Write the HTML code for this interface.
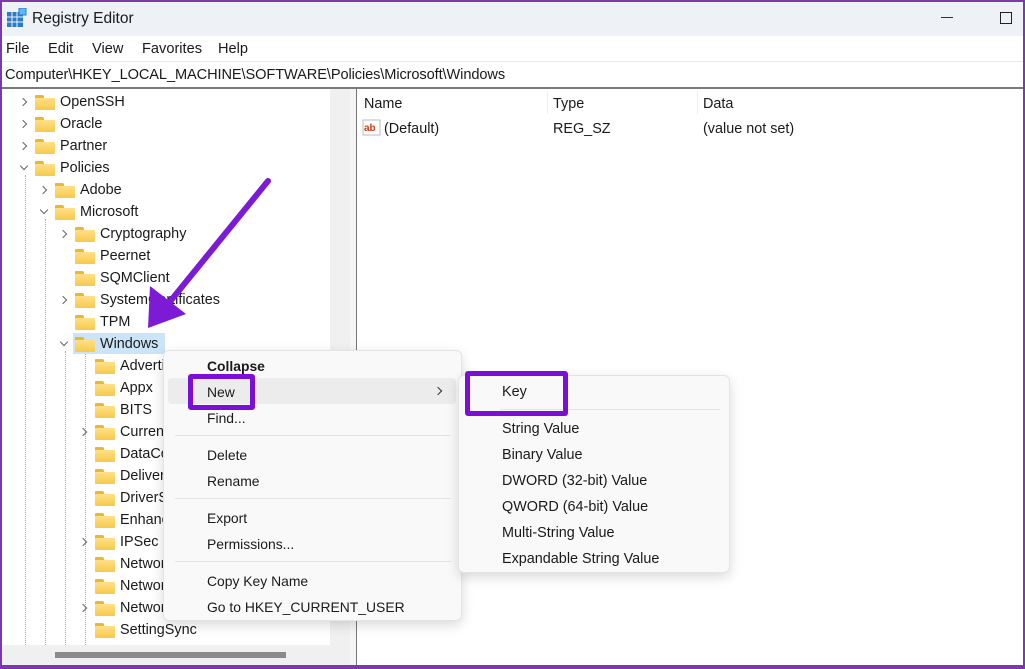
<!DOCTYPE html>
<html><head><style>
*{margin:0;padding:0;box-sizing:border-box}
body{width:1025px;height:669px;overflow:hidden;background:#fff;font-family:"Liberation Sans",sans-serif;font-size:14.4px;color:#1a1a1a;position:relative}
.a{position:absolute;white-space:nowrap}
.fold{position:absolute;width:20px;height:15px}
.fold:before{content:"";position:absolute;left:0;top:0;width:9px;height:4px;background:#e8b830;border-radius:1px 2px 0 0}
.fold:after{content:"";position:absolute;left:0;top:3px;width:20px;height:12px;background:linear-gradient(#ffe08a,#f7c948);border-radius:1px}
.chev{position:absolute;width:6px;height:6px;border-right:1.3px solid #666;border-bottom:1.3px solid #666}
.r{transform:rotate(-45deg)}
.d{transform:rotate(45deg)}
.mi{position:absolute;left:207px;font-size:13.9px;white-space:nowrap;margin-top:1px}
.si{position:absolute;left:502px;font-size:14.4px;white-space:nowrap;margin-top:1px}
.vl{position:absolute;border-left:1px dotted #aaa;width:0}
</style></head><body>
<div class="a" style="left:0;top:0;width:1025px;height:669px;border:2px solid #7b3aa8;border-bottom-width:4px;z-index:50;pointer-events:none"></div>
<div class="a" style="left:0;top:0;width:1025px;height:36px;background:#eef2f7"></div>
<svg class="a" style="left:7px;top:8px" width="20" height="20"><rect x="0" y="4" width="16" height="15" fill="#2d7bc4"/><g stroke="#eef2f7" stroke-width="1"><line x1="0" y1="9" x2="16" y2="9"/><line x1="0" y1="14" x2="16" y2="14"/><line x1="5" y1="4" x2="5" y2="19"/><line x1="10" y1="4" x2="10" y2="19"/></g><rect x="12" y="0" width="7" height="7" fill="#5cb8f0" stroke="#2d7bc4"/></svg>
<div class="a" style="left:32px;top:10px;font-size:15.5px">Registry Editor</div>
<div class="a" style="left:941px;top:17px;width:12px;height:1px;background:#333"></div>
<div class="a" style="left:1000px;top:12px;width:12px;height:12px;border:1.5px solid #222"></div>
<div class="a" style="left:6px;top:41px;font-size:14.6px">File</div>
<div class="a" style="left:48px;top:41px;font-size:14.6px">Edit</div>
<div class="a" style="left:92px;top:41px;font-size:14.6px">View</div>
<div class="a" style="left:142px;top:41px;font-size:14.6px">Favorites</div>
<div class="a" style="left:218px;top:41px;font-size:14.6px">Help</div>
<div class="a" style="left:0;top:61px;width:1025px;height:1px;background:#e8e8e8"></div>
<div class="a" style="left:5px;top:67px;font-size:14.6px;letter-spacing:-0.1px">Computer\HKEY_LOCAL_MACHINE\SOFTWARE\Policies\Microsoft\Windows</div>
<div class="a" style="left:0;top:87px;width:1025px;height:2px;background:#7a7a7a"></div>
<div class="a" style="left:330px;top:89px;width:20px;height:556px;background:#f0f0f0"></div>
<div class="a" style="left:0;top:645px;width:350px;height:20px;background:#f0f0f0"></div>
<div class="a" style="left:55px;top:652px;width:231px;height:6px;background:#8a8a8a"></div>
<div class="a" style="left:350px;top:89px;width:7px;height:576px;background:#f5f5f5;border-right:1.5px solid #777"></div>
<div class="vl" style="left:25px;top:175px;height:470px"></div>
<div class="vl" style="left:45px;top:219px;height:426px"></div>
<div class="vl" style="left:65px;top:351px;height:294px"></div>
<div class="vl" style="left:85px;top:351px;height:294px"></div>
<div style="position:absolute;left:0;top:1px;width:350px;height:640px">
<div class="chev r" style="left:20px;top:98px"></div><div class="fold" style="left:35px;top:94px"></div><div class="a" style="left:60px;top:93px">OpenSSH</div>
<div class="chev r" style="left:20px;top:120px"></div><div class="fold" style="left:35px;top:116px"></div><div class="a" style="left:60px;top:115px">Oracle</div>
<div class="chev r" style="left:20px;top:142px"></div><div class="fold" style="left:35px;top:138px"></div><div class="a" style="left:60px;top:137px">Partner</div>
<div class="chev d" style="left:21px;top:162px"></div><div class="fold" style="left:35px;top:160px"></div><div class="a" style="left:60px;top:159px">Policies</div>
<div class="chev r" style="left:40px;top:186px"></div><div class="fold" style="left:55px;top:182px"></div><div class="a" style="left:80px;top:181px">Adobe</div>
<div class="chev d" style="left:41px;top:206px"></div><div class="fold" style="left:55px;top:204px"></div><div class="a" style="left:80px;top:203px">Microsoft</div>
<div class="chev r" style="left:60px;top:230px"></div><div class="fold" style="left:75px;top:226px"></div><div class="a" style="left:100px;top:225px">Cryptography</div>
<div class="fold" style="left:75px;top:248px"></div><div class="a" style="left:100px;top:247px">Peernet</div>
<div class="fold" style="left:75px;top:270px"></div><div class="a" style="left:100px;top:269px">SQMClient</div>
<div class="chev r" style="left:60px;top:296px"></div><div class="fold" style="left:75px;top:292px"></div><div class="a" style="left:100px;top:291px">SystemCertificates</div>
<div class="fold" style="left:75px;top:314px"></div><div class="a" style="left:100px;top:313px">TPM</div>
<div class="a" style="left:73px;top:332px;width:92px;height:21px;background:#cce4f7"></div>
<div class="chev d" style="left:61px;top:338px"></div><div class="fold" style="left:75px;top:336px"></div><div class="a" style="left:100px;top:335px">Windows</div>
<div class="fold" style="left:95px;top:358px"></div><div class="a" style="left:120px;top:357px">Advertising</div>
<div class="fold" style="left:95px;top:380px"></div><div class="a" style="left:120px;top:379px">Appx</div>
<div class="fold" style="left:95px;top:402px"></div><div class="a" style="left:120px;top:401px">BITS</div>
<div class="chev r" style="left:80px;top:428px"></div><div class="fold" style="left:95px;top:424px"></div><div class="a" style="left:120px;top:423px">CurrentVersion</div>
<div class="fold" style="left:95px;top:446px"></div><div class="a" style="left:120px;top:445px">DataCollection</div>
<div class="fold" style="left:95px;top:468px"></div><div class="a" style="left:120px;top:467px">DeliveryOptimization</div>
<div class="fold" style="left:95px;top:490px"></div><div class="a" style="left:120px;top:489px">DriverSearching</div>
<div class="fold" style="left:95px;top:512px"></div><div class="a" style="left:120px;top:511px">EnhancedStorage</div>
<div class="chev r" style="left:80px;top:538px"></div><div class="fold" style="left:95px;top:534px"></div><div class="a" style="left:120px;top:533px">IPSec</div>
<div class="fold" style="left:95px;top:556px"></div><div class="a" style="left:120px;top:555px">Network Connections</div>
<div class="fold" style="left:95px;top:578px"></div><div class="a" style="left:120px;top:577px">NetworkConnectivity</div>
<div class="chev r" style="left:80px;top:604px"></div><div class="fold" style="left:95px;top:600px"></div><div class="a" style="left:120px;top:599px">NetworkProvider</div>
<div class="fold" style="left:95px;top:622px"></div><div class="a" style="left:120px;top:621px">SettingSync</div>
</div>
<div class="a" style="left:364px;top:96px">Name</div>
<div class="a" style="left:547px;top:92px;width:1px;height:22px;background:#eee"></div>
<div class="a" style="left:553px;top:96px">Type</div>
<div class="a" style="left:697px;top:92px;width:1px;height:22px;background:#eee"></div>
<div class="a" style="left:703px;top:96px">Data</div>
<svg class="a" style="left:362px;top:119px" width="20" height="18"><rect x="1" y="1" width="17" height="15" fill="#fff" stroke="#bbb"/><text x="2" y="12" font-size="10" font-weight="bold" fill="#d03a1a" font-family="Liberation Sans">ab</text></svg>
<div class="a" style="left:384px;top:121px">(Default)</div>
<div class="a" style="left:553px;top:121px">REG_SZ</div>
<div class="a" style="left:703px;top:121px">(value not set)</div>
<div class="a" style="left:163px;top:350px;width:299px;height:271px;background:#f9f9f9;border:1px solid #e4e4e4;border-radius:6px;box-shadow:0 4px 12px rgba(0,0,0,.15);z-index:5"></div>
<div style="position:absolute;left:0;top:0;width:1025px;height:669px;z-index:6">
<div class="a" style="left:168px;top:378px;width:288px;height:26px;background:#ececec;border-radius:4px"></div>
<div class="mi" style="top:357px;font-weight:bold">Collapse</div>
<div class="mi" style="top:383px">New</div>
<div class="chev r" style="left:435px;top:388px;border-color:#333"></div>
<div class="mi" style="top:409px">Find...</div>
<div class="a" style="left:175px;top:435px;width:276px;height:1px;background:#e3e3e3"></div>
<div class="mi" style="top:446px">Delete</div>
<div class="mi" style="top:472px">Rename</div>
<div class="a" style="left:175px;top:498px;width:276px;height:1px;background:#e3e3e3"></div>
<div class="mi" style="top:509px">Export</div>
<div class="mi" style="top:535px">Permissions...</div>
<div class="a" style="left:175px;top:561px;width:276px;height:1px;background:#e3e3e3"></div>
<div class="mi" style="top:572px">Copy Key Name</div>
<div class="mi" style="top:598px">Go to HKEY_CURRENT_USER</div>
<div class="a" style="left:188px;top:374px;width:67px;height:36px;border:5px solid #7c0fd6;border-radius:3px"></div>
</div>
<div class="a" style="left:458px;top:375px;width:272px;height:198px;background:#f9f9f9;border:1px solid #e4e4e4;border-radius:6px;box-shadow:0 4px 12px rgba(0,0,0,.15);z-index:7"></div>
<div style="position:absolute;left:0;top:0;width:1025px;height:669px;z-index:8">
<div class="si" style="top:383px">Key</div>
<div class="a" style="left:500px;top:409px;width:220px;height:1px;background:#e3e3e3"></div>
<div class="si" style="top:420px">String Value</div>
<div class="si" style="top:446px">Binary Value</div>
<div class="si" style="top:472px">DWORD (32-bit) Value</div>
<div class="si" style="top:498px">QWORD (64-bit) Value</div>
<div class="si" style="top:524px">Multi-String Value</div>
<div class="si" style="top:550px">Expandable String Value</div>
<div class="a" style="left:465px;top:371px;width:103px;height:45px;border:5px solid #7c0fd6;border-radius:3px"></div>
</div>
<svg class="a" style="left:0;top:0;z-index:9" width="400" height="400"><line x1="268" y1="181" x2="168" y2="304" stroke="#7c1ad6" stroke-width="6" stroke-linecap="round"/><polygon points="148,328 150,286 186,314" fill="#7c1ad6"/></svg>
</body></html>
